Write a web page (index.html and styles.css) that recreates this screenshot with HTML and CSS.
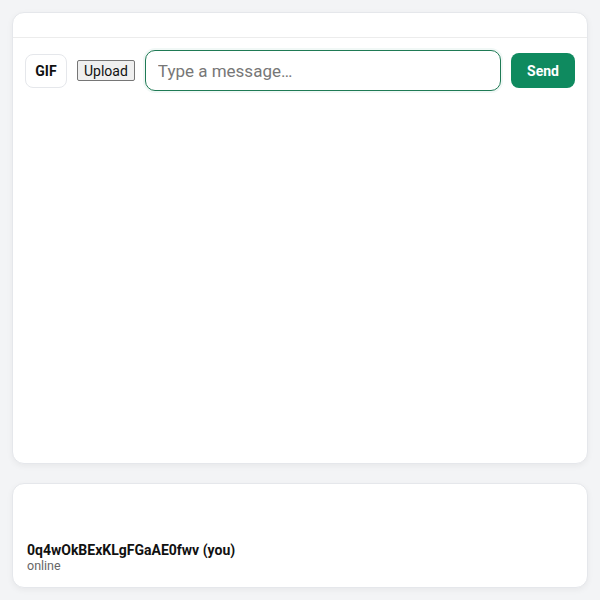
FILE: index.html
```html
<!DOCTYPE html>
<html>
<head>
    <title>Chat</title>
    <link rel="stylesheet" href="styles.css">
</head>
<body>
    <div class="chat-card">
        <div class="chat-header"></div>
        <div class="composer">
            <button class="gif-btn">GIF</button>
            <button class="upload-btn">Upload</button>
            <input type="text" class="message-input" placeholder="Type a message…">
            <button class="send-btn">Send</button>
        </div>
        <div class="messages"></div>
    </div>

    <div class="user-card">
        <div class="user-name">0q4wOkBExKLgFGaAE0fwv (you)</div>
        <div class="user-status">online</div>
    </div>
</body>
</html>
```

FILE: styles.css
```css
* {
    box-sizing: border-box;
}

body {
    margin: 0;
    padding: 12px;
    background: #f3f4f6;
    font-family: Roboto, "Liberation Sans", sans-serif;
    display: flex;
    flex-direction: column;
    gap: 19px;
    height: 600px;
}

.chat-card,
.user-card {
    background: white;
    border: 1px solid #e5e7eb;
    border-radius: 12px;
    box-shadow: 0 2px 6px rgba(0, 0, 0, 0.05);
}

.chat-card {
    height: 452px;
    display: flex;
    flex-direction: column;
}

.chat-header {
    height: 25px;
    border-bottom: 1px solid #ececec;
}

.composer {
    display: flex;
    align-items: center;
    gap: 10px;
    padding: 12px;
}

.gif-btn {
    width: 42px;
    height: 34px;
    background: white;
    border: 1px solid #e5e7eb;
    border-radius: 8px;
    font-family: Roboto, "Liberation Sans", sans-serif;
    font-weight: bold;
    font-size: 14px;
    color: #111;
}

.upload-btn {
    font-family: Roboto, "Liberation Sans", sans-serif;
    font-size: 14px;
    padding: 1px 6px;
    height: 21px;
    border: 1px solid #767676;
    border-radius: 2px;
    background: #efefef;
    color: #111;
}

.message-input {
    flex: 1;
    height: 41px;
    padding: 0 12px;
    border: 1.5px solid #1f7a55;
    border-radius: 10px;
    font-size: 17px;
    font-family: Roboto, "Liberation Sans", sans-serif;
    outline: none;
    box-shadow: 0 0 0 2px rgba(15, 138, 95, 0.06);
}

.message-input::placeholder {
    color: #777;
}

.send-btn {
    width: 64px;
    height: 35px;
    background: #0f8a5f;
    color: white;
    border: none;
    border-radius: 8px;
    font-family: Roboto, "Liberation Sans", sans-serif;
    font-weight: bold;
    font-size: 14px;
}

.messages {
    flex: 1;
}

.user-card {
    height: 105px;
    padding: 0 14px 14px;
    display: flex;
    flex-direction: column;
    justify-content: flex-end;
}

.user-name {
    font-weight: bold;
    font-size: 14px;
    color: #111;
}

.user-status {
    font-size: 12.5px;
    color: #666;
}
```
